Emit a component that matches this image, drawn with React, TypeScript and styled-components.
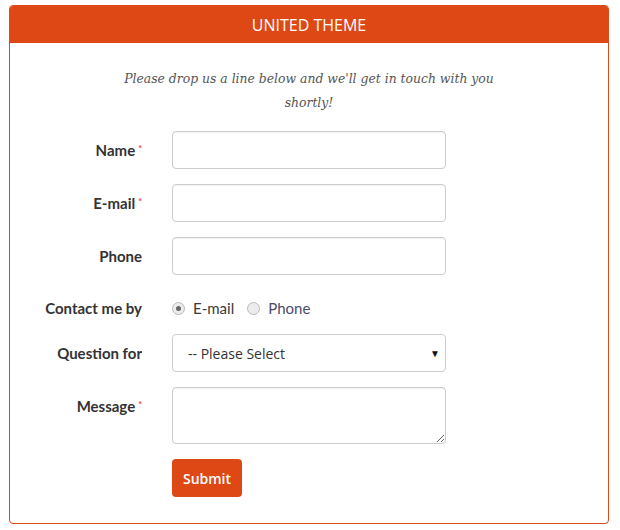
import React from "react";
import styled, { createGlobalStyle } from "styled-components";

const accent = "#dd4814";

const GlobalStyle = createGlobalStyle`
  body {
    margin: 0;
    background: #fff;
    font-family: "Open Sans", "Liberation Sans", sans-serif;
  }
`;

const Page = styled.div`
  padding: 5px 12px 0 9px;
`;

const Panel = styled.div`
  width: 600px;
  height: 519px;
  box-sizing: border-box;
  border: 1px solid ${accent};
  border-radius: 4px;
  overflow: hidden;
  display: flex;
  flex-direction: column;
`;

const PanelHeader = styled.div`
  height: 37px;
  background: ${accent};
  color: #fff;
  display: flex;
  align-items: center;
  justify-content: center;
  font-family: "Open Sans", sans-serif;
  font-size: 16px;
`;

const PanelBody = styled.div`
  padding: 24px 0 0 0;
`;

const Intro = styled.p`
  margin: 0 auto 16px;
  max-width: 376px;
  text-align: center;
  font-family: "DejaVu Serif", serif;
  font-style: italic;
  font-size: 12.4px;
  line-height: 24px;
  color: #555;
`;

const Form = styled.form`
  display: flex;
  flex-direction: column;
  gap: 15px;
`;

const Row = styled.div`
  display: grid;
  grid-template-columns: 132px 274px;
  column-gap: 30px;
  align-items: start;
`;

const Label = styled.label<{ $pad?: number }>`
  display: block;
  text-align: right;
  font-family: "Lato", sans-serif;
  font-weight: 700;
  font-size: 15px;
  color: #333;
  height: ${(p) => (p.$pad ? "auto" : "38px")};
  line-height: ${(p) => (p.$pad ? "19px" : "38px")};
  padding-top: ${(p) => p.$pad ?? 0}px;
  overflow: hidden;
`;

const Req = styled.span`
  color: #e8434c;
  font-size: 9px;
  line-height: 0;
  vertical-align: 4px;
  margin-left: 3px;
`;

const Input = styled.input`
  display: block;
  margin: 0;
  box-sizing: border-box;
  width: 274px;
  height: 38px;
  border: 1px solid #ccc;
  border-radius: 4px;
  box-shadow: inset 0 1px 1px rgba(0, 0, 0, 0.05);
  padding: 6px 12px;
  font-size: 14px;
`;

const TextArea = styled.textarea`
  box-sizing: border-box;
  width: 274px;
  height: 57px;
  border: 1px solid #ccc;
  border-radius: 4px;
  box-shadow: inset 0 1px 1px rgba(0, 0, 0, 0.05);
  padding: 6px 12px;
  margin: 0;
  display: block;
  font-size: 14px;
`;

const SelectWrap = styled.div`
  position: relative;
  width: 274px;
  height: 38px;
`;

const Select = styled.select`
  appearance: none;
  display: block;
  margin: 0;
  box-sizing: border-box;
  width: 100%;
  height: 38px;
  border: 1px solid #ccc;
  border-radius: 4px;
  background: #fff;
  padding: 0 0 0 15px;
  font-family: "Open Sans", sans-serif;
  font-size: 14px;
  color: #333;
`;

const Caret = styled.span`
  position: absolute;
  right: 6px;
  top: 12px;
  font-size: 10px;
  color: #111;
  pointer-events: none;
`;

const Radios = styled.div`
  height: 29px;
  padding-top: 9px;
  box-sizing: border-box;
  display: flex;
  align-items: flex-start;
  gap: 13px;
  font-family: "Lato", sans-serif;
  font-weight: 400;
  font-size: 15px;
`;

const RadioLabel = styled.label<{ $muted?: boolean }>`
  display: flex;
  align-items: center;
  gap: 8px;
  line-height: 19px;
  color: ${(p) => (p.$muted ? "#4a4a6a" : "#3a3a3a")};
`;

const Radio = styled.input`
  appearance: none;
  margin: 0;
  width: 13px;
  height: 13px;
  border-radius: 50%;
  border: 1px solid #b9b9b9;
  background: #ececec;
  position: relative;
  &:checked::after {
    content: "";
    position: absolute;
    left: 3px;
    top: 3px;
    width: 5px;
    height: 5px;
    border-radius: 50%;
    background: #666;
  }
`;

const Submit = styled.button`
  display: block;
  margin: 0;
  width: 70px;
  height: 38px;
  background: ${accent};
  color: #fff;
  border: none;
  border-radius: 4px;
  font-family: "Open Sans", sans-serif;
  font-weight: 600;
  font-size: 14px;
  padding: 0;
`;

export default function App() {
  return (
    <>
      <GlobalStyle />
      <Page>
        <Panel>
          <PanelHeader>UNITED THEME</PanelHeader>
          <PanelBody>
            <Intro>
              Please drop us a line below and we'll get in touch with you shortly!
            </Intro>
            <Form onSubmit={(e) => e.preventDefault()}>
              <Row>
                <Label>
                  Name<Req>*</Req>
                </Label>
                <Input type="text" />
              </Row>
              <Row>
                <Label>
                  E-mail<Req>*</Req>
                </Label>
                <Input type="email" />
              </Row>
              <Row>
                <Label>Phone</Label>
                <Input type="tel" />
              </Row>
              <Row>
                <Label $pad={9}>Contact me by</Label>
                <Radios>
                  <RadioLabel>
                    <Radio type="radio" name="contact" defaultChecked />
                    E-mail
                  </RadioLabel>
                  <RadioLabel $muted>
                    <Radio type="radio" name="contact" />
                    Phone
                  </RadioLabel>
                </Radios>
              </Row>
              <Row>
                <Label>Question for</Label>
                <SelectWrap>
                  <Select defaultValue="">
                    <option value="">-- Please Select</option>
                  </Select>
                  <Caret>▼</Caret>
                </SelectWrap>
              </Row>
              <Row>
                <Label>
                  Message<Req>*</Req>
                </Label>
                <TextArea />
              </Row>
              <Row>
                <span />
                <Submit type="submit">Submit</Submit>
              </Row>
            </Form>
          </PanelBody>
        </Panel>
      </Page>
    </>
  );
}
